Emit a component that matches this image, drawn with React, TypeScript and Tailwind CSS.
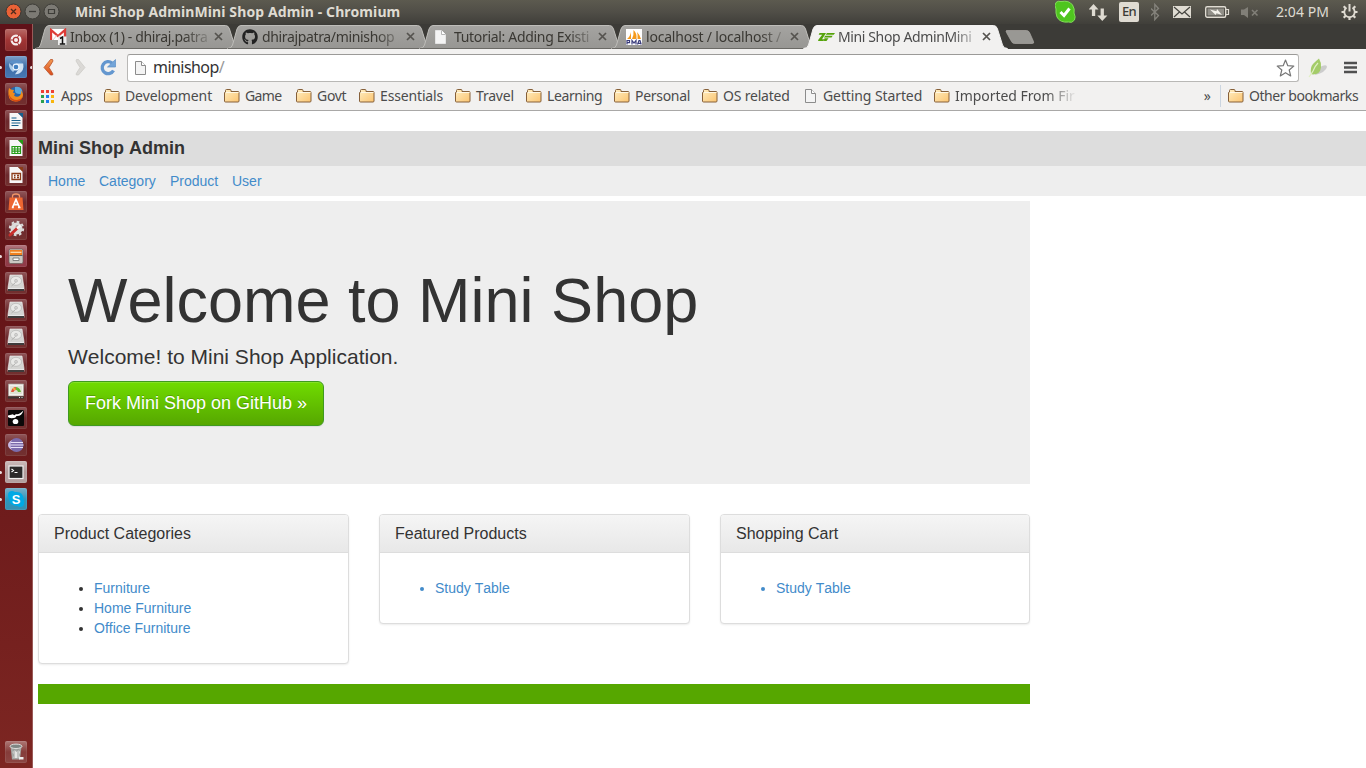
import React from "react";
import { FaGithub } from "react-icons/fa";

/* ---------- small drawings ---------- */

const Folder = () => (
  <svg width="16" height="14" viewBox="0 0 16 14" className="shrink-0">
    <defs>
      <linearGradient id="fold" x1="0" y1="0" x2="1" y2="1">
        <stop offset="0" stopColor="#ffeec2" />
        <stop offset="1" stopColor="#fbc470" />
      </linearGradient>
    </defs>
    <path d="M.5 12V3.500h1V1.500q0-1 1-1h3.500q1 0 1 1v1h7q1 0 1 1V12q0 1-1 1h-12.500q-1 0-1-1z" fill="url(#fold)" stroke="#86603a" />
    <path d="M1.500 3.500h13" stroke="#fff8e4" />
  </svg>
);

const Page = ({ dark = true }: { dark?: boolean }) => (
  <svg width="13" height="16" viewBox="0 0 13 16" className="shrink-0">
    <path d="M1.500 1.500h6l4 4v9h-10z" fill="#f4f4f4" stroke={dark ? "#8c8c8c" : "#e4e4e4"} />
    <path d="M7.500 1.500v4h4" fill="#fff" stroke={dark ? "#8c8c8c" : "#b5b5b5"} />
  </svg>
);

const Gmail = () => (
  <svg width="18" height="18" viewBox="0 0 18 18">
    <path d="M0 1h16v11H0z" fill="#fff" />
    <path d="M1 12V2l7 6 7-6v10" fill="none" stroke="#dd3b36" strokeWidth="2.300" />
    <path d="M3 12l4-5M13 12L9 7" stroke="#d8b4b0" strokeWidth=".7" />
    <path d="M8 8.500h8.500V17H8z" fill="#eee" />
    <path d="M10 10.500l2.500-1.500v7M9.800 16h5.400" fill="none" stroke="#111" strokeWidth="1.500" />
  </svg>
);

const Sails = () => (
  <svg width="16" height="16" viewBox="0 0 16 16">
    <path d="M0 0h16v16H0z" fill="#fff" />
    <path d="M1 10q3-2 4-7v7zM6 10q2-4 1.500-9Q11 4 10.500 10zM11.500 10q.5-4-.5-7 3 3 4 7z" fill="#f59a1c" />
    <path d="M1 15.500v-4h2.500v2.200H1M6 15.500v-4l2 2.500 2-2.500v4M11.500 15.500l1.500-4h1l1.200 4M12 14.300h3" fill="none" stroke="#3b3d7c" strokeWidth="1.200" />
  </svg>
);

const Zend = () => (
  <svg width="17" height="10" viewBox="0 0 17 10">
    <path d="M1.500 1H8L4 7.200h2.500L5.500 9H0l.5-1.500L4.200 2.800H.7zM9 1h8l-1.300 1.800H7.700zM7.200 3.800h7.500l-1.200 1.700H6zM6.500 6.200h4L8.500 9H6z" fill="#55a30a" />
  </svg>
);

/* ---------- top panel ---------- */

const WindowButtons = () => (
  <svg width="70" height="24" viewBox="0 0 70 24" className="shrink-0">
    <circle cx="13.500" cy="11.500" r="7.500" fill="#ea6236" stroke="#3a3632" />
    <path d="M11 9l5 5m0-5l-5 5" stroke="#4e2b1c" strokeWidth="1.300" />
    <circle cx="32.500" cy="11.500" r="7.500" fill="#7c7a74" stroke="#3e3d38" />
    <path d="M29 11.500h7" stroke="#3d3c38" strokeWidth="1.300" />
    <circle cx="51.500" cy="11.500" r="7.500" fill="#7c7a74" stroke="#3e3d38" />
    <path d="M48.500 9.500h6v4h-6z" fill="none" stroke="#3d3c38" strokeWidth="1.200" />
  </svg>
);

const Indicators = () => (
  <div className="flex h-full items-center">
    <svg width="34" height="24" viewBox="0 0 34 24">
      <path d="M1 2.500Q3 .5 6 1.600 14 0 17.500 5q2.500 4 1.500 8 2 4 .5 7-2.500 3.500-6 2Q5 23 2 17 .5 13 1 9-1 5 1 2.500z" fill="#4fc51f" stroke="#83dc5b" />
      <path d="M5.500 12l3.500 3.500 5.500-7" fill="none" stroke="#fff" strokeWidth="3" />
    </svg>
    <svg width="30" height="24" viewBox="0 0 30 24" fill="#dfdbd2">
      <path d="M4.500 4L9.500 9.500H6.200V16H2.900V9.500H-.5z" />
      <path d="M13.300 21L8.300 15.500h3.300V8.500h3.300v7h3.500z" />
    </svg>
    <div className="mr-[12px] flex h-5 w-5 items-center justify-center rounded-[2px] bg-[#dfdbd2] font-['Noto_Sans',sans-serif] text-[13px] font-medium tracking-[-0.6px] text-[#3c3b37]">En</div>
    <svg width="22" height="24" viewBox="0 0 22 24" fill="none" stroke="#85837c" strokeWidth="1.300">
      <path d="M0 8.500l7.500 7-3.700 4V4.500l3.700 4-7.500 7" />
    </svg>
    <svg width="32" height="24" viewBox="0 0 32 24">
      <path d="M0 6h18v12H0z" fill="#dfdbd2" />
      <path d="M1 7l8 7 8-7M1 17l5.500-5M17 17l-5.500-5" fill="none" stroke="#45443f" strokeWidth="1.200" />
    </svg>
    <svg width="35" height="24" viewBox="0 0 35 24">
      <rect x=".7" y="6.700" width="20" height="10.600" rx="1.500" fill="none" stroke="#dfdbd2" strokeWidth="1.400" />
      <path d="M2.500 8.500H19v7H2.500z" fill="#918f88" />
      <path d="M21 9.500h2.500v5H21" fill="none" stroke="#dfdbd2" strokeWidth="1.200" />
      <path d="M5 9.500l6.500 1.700.5-2.200 5 6-5.500-1.700-.8 1.700z" fill="#f4f2ec" />
    </svg>
    <svg width="36" height="24" viewBox="0 0 36 24">
      <path d="M1 9.500h3L8 7v11l-4-3H1z" fill="#817f78" />
      <path d="M12 10l5.500 5.500m0-5.500L12 15.500" stroke="#817f78" strokeWidth="1.600" />
    </svg>
    <span className="-mt-[2px] w-[65px] whitespace-nowrap font-['Noto_Sans',sans-serif] text-[14px] tracking-[0.05px] text-[#dfdbd2]">2:04 PM</span>
    <svg width="25" height="24" viewBox="0 0 25 24" fill="none" stroke="#dfdbd2">
      <path d="M5.500 7.800a5.200 5.200 0 1 0 6 0" strokeWidth="1.800" />
      <path d="M8.500 4v7.500" strokeWidth="2" />
      <path d="M8.500 18v2M.5 12h2.500M14 12h2.500M2.700 6.200l2 2M14.300 6.200l-2 2M2.700 17.800l2-2M14.300 17.800l-2-2" strokeWidth="2.200" />
    </svg>
  </div>
);

const TopPanel = () => (
  <header className="flex h-6 shrink-0 items-center justify-between bg-linear-to-b from-[#5c5a4f] via-[#504e47] to-[#403f3a]">
    <div className="flex items-center">
      <WindowButtons />
      <span className="-mt-[2px] ml-[5px] whitespace-nowrap font-['Noto_Sans',sans-serif] text-[14px] font-bold tracking-[0.11px] text-[#dfdbd2]">Mini Shop AdminMini Shop Admin - Chromium</span>
    </div>
    <Indicators />
  </header>
);

/* ---------- launcher ---------- */

const Disk = () => (
  <g>
    <path d="M5 3h12l2 12.500v3H3v-3z" fill="#d4d4d2" stroke="#f1efef" strokeWidth=".6" />
    <ellipse cx="11" cy="8.800" rx="5.500" ry="4.500" fill="#e9e9e7" stroke="#b5b5b3" strokeWidth=".7" />
    <circle cx="11" cy="8.800" r="1.500" fill="#d2d2d0" stroke="#aaa" strokeWidth=".5" />
    <path d="M6.500 14l4-3.500" stroke="#b0b0ae" />
    <path d="M3 17h16v2H3z" fill="#3f3b3b" />
    <path d="M3 16.500h16" stroke="#eee" strokeWidth=".8" />
  </g>
);

const Sheet = ({ color, kind }: { color: string; kind: "text" | "grid" | "slide" }) => (
  <g>
    <path d="M4.500 3H13l4.500 4.500V19h-13z" fill="#f7f7f7" />
    <path d="M13 3h5v5z" fill={color} />
    {kind === "text" && <path d="M6.500 8h5M6.500 10.500h9M6.500 13h9M6.500 15.500h7" stroke={color} strokeWidth="1.200" />}
    {kind === "grid" && <path d="M7 9.500h8.500v7H7zM7 12h8.500M7 14.200h8.500M9.800 9.500v7M12.700 9.500v7" fill="none" stroke={color} strokeWidth="1.200" />}
    {kind === "slide" && <path d="M7 9.500h8.500v6H7zM9 11.500h1.500M9 13.500h1.500M12 11.500h2M12 13.500h2" fill="none" stroke={color} strokeWidth="1.300" />}
  </g>
);

type Tile = { bg: string; art: React.ReactNode; left?: boolean; right?: boolean };

const plain = "bg-linear-to-b from-[#91575a] via-[#6d2a2e] to-[#73302f]";

const tiles: Tile[] = [
  {
    bg: "bg-linear-to-b from-[#b86b68] via-[#a13535] to-[#8d2c2d]",
    art: (
      <g>
        <circle cx="11" cy="11" r="5.500" fill="#f6eeee" />
        <circle cx="11" cy="11" r="2.600" fill="none" stroke="#a33" strokeWidth="1.200" />
        <path d="M5.500 11h3M12.300 8.600l1.600-2.700M12.300 13.400l1.600 2.700" stroke="#a33" strokeWidth="1" />
      </g>
    ),
  },
  {
    bg: "bg-linear-to-b from-[#7da1cb] via-[#3e6da6] to-[#4779b4]",
    left: true,
    right: true,
    art: (
      <g>
        <path d="M4 6.500q2-2.500 7-2.500t7 4l-7 1z" fill="#5b90c8" />
        <path d="M4 7q-.5 6 4 9l2-2-3-4z" fill="#a9cbe9" />
        <path d="M11 7.500h7.200q1.300 7-4 10-2 1-4.200.8l3.500-5z" fill="#cfe2f3" />
        <circle cx="11" cy="11" r="2.900" fill="#3f7fc0" stroke="#eef6ff" strokeWidth="1.100" />
      </g>
    ),
  },
  {
    bg: plain,
    art: (
      <g>
        <circle cx="11" cy="10.800" r="7" fill="#2766ac" />
        <path d="M10 4q5-1 7 3 1 3-2 4-5 0-5-3z" fill="#59a8dc" />
        <path d="M4 5l2 1.500 3 .5-1 2.500 2 1-1 2q3 2.500 6 0 2-2 1-5 3 3 1.500 7-2 4-7 4Q4 18 3.500 12 3 8 4 5z" fill="#f18a1c" />
        <path d="M4 11q2 6 8 6 4-.5 5.500-3-1.500 4.800-7 4.500Q4 18 4 11z" fill="#d84a12" />
      </g>
    ),
  },
  { bg: plain, art: <Sheet color="#175f8c" kind="text" /> },
  { bg: plain, art: <Sheet color="#259c16" kind="grid" /> },
  { bg: plain, art: <Sheet color="#8c3c18" kind="slide" /> },
  {
    bg: plain,
    art: (
      <g>
        <path d="M7.500 7V5q0-2 3.500-2t3.500 2v2" fill="none" stroke="#f39566" strokeWidth="1.300" />
        <path d="M4.500 6.500h13l1 12.500h-15z" fill="#ed6631" />
        <path d="M7.500 16.500L11 8.500l3.500 8M8.500 13.700h5M6.800 16.500h2M13 16.500h2.500" fill="none" stroke="#fff" strokeWidth="1.700" />
      </g>
    ),
  },
  {
    bg: plain,
    art: (
      <g>
        <circle cx="11.500" cy="10.500" r="6" fill="#dcdcda" />
        <circle cx="11.500" cy="10.500" r="6.700" fill="none" stroke="#dcdcda" strokeWidth="2" strokeDasharray="2.700 2.560" />
        <circle cx="12.500" cy="9" r="2" fill="#b9a3a3" />
        <path d="M5 17l7-6.500" stroke="#c92f2c" strokeWidth="3" strokeLinecap="round" />
        <path d="M12 10.500l3.500-3" stroke="#f7f7f7" strokeWidth="2.500" />
      </g>
    ),
  },
  {
    bg: "bg-linear-to-b from-[#b27880] via-[#963e4b] to-[#8f3a46]",
    left: true,
    art: (
      <g>
        <rect x="4" y="4" width="14" height="14.500" rx="1.500" fill="#cbc8c3" stroke="#665c58" strokeWidth=".7" />
        <path d="M5 5h12v5H5z" fill="#f07f1e" />
        <path d="M5.500 7.300h11" stroke="#ffe2b8" strokeWidth="1.200" />
        <path d="M4.500 10.500h13" stroke="#615e5b" />
        <path d="M8 13h6v2.500H8z" fill="#fff" stroke="#777" strokeWidth=".9" />
      </g>
    ),
  },
  { bg: plain, art: <Disk /> },
  { bg: plain, art: <Disk /> },
  { bg: plain, art: <Disk /> },
  { bg: plain, art: <Disk /> },
  {
    bg: plain,
    art: (
      <g>
        <path d="M3.500 4h15v12h-15z" fill="#f2f0ec" stroke="#aaa69f" strokeWidth=".7" />
        <path d="M5 6h12v8H5z" fill="#dfe2d3" />
        <path d="M6 12q1-5 5-5v3q-2 0-2.500 2z" fill="#e1543c" />
        <path d="M11 7q4 .5 5 5h-3q-.5-2-2-2z" fill="#67b535" />
        <path d="M8 8.500l2.500 1" stroke="#f3be42" strokeWidth="1.500" />
        <path d="M3 16.500h16v2H3z" fill="#3b3533" />
        <path d="M14 17.500h1M16.500 17.500h1" stroke="#ddd" />
      </g>
    ),
  },
  {
    bg: plain,
    art: (
      <g>
        <rect x="3" y="3" width="16" height="16" rx="1" fill="#0b0909" />
        <path d="M3 8.500l5-1.300q1.500 2 3-.2 3 1 7.500-3.500-2 6-7 5.500-1 2.500-3 2Q4 11.500 3 10z" fill="#fff" />
        <ellipse cx="10.500" cy="14.500" rx="2.800" ry="2.600" fill="#fff" />
      </g>
    ),
  },
  {
    bg: plain,
    art: (
      <g>
        <circle cx="11.500" cy="11" r="7" fill="#7c6cac" />
        <path d="M5 8.500h13M4.500 11h14M5 13.500h13" stroke="#e9e2f7" strokeWidth="1.100" />
        <path d="M7 6q-3 5 0 10-4-2-4-5t4-5z" fill="#c7b8e2" />
      </g>
    ),
  },
  {
    bg: "bg-linear-to-b from-[#cdbcbb] via-[#b19b9b] to-[#b5a1a1]",
    left: true,
    art: (
      <g>
        <rect x="4" y="5" width="14" height="12.500" fill="#2c2929" stroke="#f1efee" strokeWidth="1.200" />
        <path d="M6.500 8l2 1.500-2 1.500M9.500 11.500h3" fill="none" stroke="#fff" strokeWidth="1.100" />
      </g>
    ),
  },
  {
    bg: "bg-linear-to-b from-[#76afc8] via-[#2c98be] to-[#368fb0]",
    left: true,
    art: (
      <g>
        <path d="M4 4q3-2 6 0 8-1 8.500 7 2 5-1 7.500-3 1-5-.5-8 0-8.500-7Q2 7 4 4z" fill="#00a9e5" />
        <text x="11.200" y="15.800" textAnchor="middle" fontSize="13" fontWeight="700" fill="#fff" fontFamily="Liberation Sans, sans-serif">S</text>
      </g>
    ),
  },
];

const LauncherTile = ({ bg, art, left, right }: Tile) => (
  <div className="relative flex justify-center">
    {left && <span className="absolute left-0 top-[10px] h-[3px] w-[2px] rounded-r bg-[#e9dede]" />}
    {right && <span className="absolute right-0 top-[10px] h-[3px] w-[2px] rounded-l bg-[#e9dede]" />}
    <div className={"h-[22px] w-[22px] rounded-[2px] shadow-[inset_0_0_0_1px_rgba(255,255,255,0.08)] " + bg}>
      <svg width="22" height="22" viewBox="0 0 22 22">{art}</svg>
    </div>
  </div>
);

const Launcher = () => (
  <aside className="flex w-[33px] shrink-0 flex-col gap-[5px] border-r border-[#9a5a58] bg-linear-to-b from-[#5f1118] via-[#681719] to-[#7d2622] py-[5px]">
    {tiles.map((t, i) => (
      <LauncherTile key={i} {...t} />
    ))}
    <div className="mt-auto">
      <LauncherTile
        bg="bg-linear-to-b from-[#ae7976] via-[#853c3a] to-[#8c4643]"
        art={
          <g>
            <path d="M5.500 5h11l-1.500 13.500H7z" fill="#a5a7a4" />
            <path d="M7.500 11l2-2 2 2 2-2 1.500 2-1 3 1 3h-7l1-3z" fill="#e4e4e2" />
            <path d="M9 8v9M13 8v9" stroke="#8e908d" strokeWidth=".8" />
            <ellipse cx="11" cy="5.300" rx="6" ry="2.200" fill="#7f8784" stroke="#dededc" />
            <path d="M14 16h4.500v2.500H14z" fill="#eee" />
          </g>
        }
      />
    </div>
  </aside>
);

/* ---------- browser ---------- */

type Tab = { label: string; icon: React.ReactNode; tracking: string; active?: boolean };

const tabs: Tab[] = [
  { label: "Inbox (1) - dhiraj.patra", icon: <Gmail />, tracking: "tracking-[-0.35px]" },
  { label: "dhirajpatra/minishop", icon: <FaGithub size={16} color="#222" />, tracking: "tracking-[-0.35px]" },
  { label: "Tutorial: Adding Existi", icon: <Page dark={false} />, tracking: "tracking-[-0.32px]" },
  { label: "localhost / localhost /", icon: <Sails />, tracking: "tracking-[-0.2px]" },
  { label: "Mini Shop AdminMini", icon: <Zend />, tracking: "tracking-[-0.38px]", active: true },
];

const TabItem = ({ label, icon, tracking, active }: Tab) => (
  <div className="relative h-[25px] w-[192px] shrink-0">
    <svg width="208" height="25" viewBox="0 0 208 25" className="absolute left-0 top-0">
      <defs>
        <linearGradient id="idle" x1="0" y1="0" x2="0" y2="1">
          <stop offset="0" stopColor="#a5a4a1" />
          <stop offset="1" stopColor="#979693" />
        </linearGradient>
      </defs>
      <path
        d="M1.500 24.500q4 0 5-3.500l4.500-16q1.300-3.500 4-3.500h176.500q3 0 4 3.500l5 16q1.300 3.500 5 3.500z"
        fill={active ? "#f2f1f0" : "url(#idle)"}
        stroke={active ? "#f2f1f0" : "#bebdb9"}
        strokeWidth="1"
      />
      {!active && <path d="M2 24.500h204" stroke="#6b6a66" />}
    </svg>
    <div className="relative flex h-full items-center pl-4">
      <span className="flex w-5 shrink-0 items-center">{icon}</span>
      <span
        className={
          "w-[140px] whitespace-nowrap font-['Noto_Sans',sans-serif] text-[14px] leading-[22px] [mask-image:linear-gradient(to_right,black_114px,transparent_145px)] " +
          tracking +
          (active ? " text-[#4c4c4c]" : " text-[#3a3833]")
        }
      >
        {label}
      </span>
      <svg width="9" height="9" viewBox="0 0 9 9" className="ml-[4px] shrink-0">
        <path d="M1 1l7 7m0-7L1 8" stroke="#55534f" strokeWidth="1.700" />
      </svg>
    </div>
  </div>
);

const TabStrip = () => (
  <div className="flex h-[25px] shrink-0 bg-[#3c3b37] pl-px">
    {tabs.map((t) => (
      <TabItem key={t.label} {...t} />
    ))}
    <svg width="50" height="25" viewBox="0 0 50 25" className="shrink-0">
      <path d="M12.500 6.500h20q2 0 3 2l4 9q.7 2-1 2h-18q-2 0-3-2l-5-9q-1-2 0-2z" fill="#999894" stroke="#aaa8a4" strokeWidth=".7" />
    </svg>
  </div>
);

const Toolbar = () => (
  <div className="flex h-[33px] shrink-0 items-end">
    <svg width="94" height="33" viewBox="0 0 94 33" className="shrink-0">
      <defs>
        <linearGradient id="back" x1="0" y1="0" x2="0" y2="1">
          <stop offset="0" stopColor="#f39a52" />
          <stop offset="1" stopColor="#d94b1c" />
        </linearGradient>
      </defs>
      <path d="M17.500 10.500h2l.5 1.500-4 6.500 4 6.500-.5 1h-2l-6.500-7.500z" fill="url(#back)" stroke="#b9532a" strokeWidth=".8" />
      <path d="M45.500 10.500h-2L43 12l4 6.500-4 6.500.5 1h2l6.500-7.500z" fill="#dbd9d6" stroke="#cac8c4" strokeWidth=".7" />
      <path d="M80.500 21.500a6 6 0 1 1-1.500-7.500" fill="none" stroke="#6497cf" strokeWidth="3.300" />
      <path d="M82.500 10.500V18h-8z" fill="#73a5d9" stroke="#5d8fc6" strokeWidth=".7" />
    </svg>
    <div className="flex h-[28px] w-[1172px] shrink-0 items-center rounded-[3px] border border-[#b9b8b6] border-t-[#9b9a98] bg-white pl-[6px] pr-[3px]">
      <Page />
      <span className="-mt-[2px] ml-[6px] font-['Noto_Sans',sans-serif] text-[16px] tracking-[-0.55px] text-[#333]">
        minishop<span className="text-[#999]">/</span>
      </span>
      <svg width="20" height="20" viewBox="0 0 20 20" className="ml-auto">
        <path d="M10.500 2l2.300 5.700 6 .4-4.600 3.900 1.500 5.900-5.200-3.200-5.200 3.200L6.800 12 2.200 8.100l6-.4z" fill="#fff" stroke="#777" strokeWidth="1.200" strokeLinejoin="round" />
      </svg>
    </div>
    <svg width="67" height="33" viewBox="0 0 67 33" className="shrink-0">
      <path d="M16 26q3-7 7-9 5-2 5 1-1 5-12 8z" fill="#ccc" />
      <path d="M12 25q-1-7 2-10 4-4 6-5.500 2.500 4 2 9-1 7-8 7z" fill="#a4cc68" />
      <path d="M10 28q3-4 4-6 2-5 5-8" fill="none" stroke="#e0efc4" strokeWidth="1.200" />
      <path d="M45 14h13M45 18.500h13M45 23h13" stroke="#505050" strokeWidth="2.500" />
    </svg>
  </div>
);

type Mark = { label: string; w: string; tracking: string; page?: boolean };

const marks: Mark[] = [
  { label: "Development", w: "w-[120px]", tracking: "tracking-[-0.1px]" },
  { label: "Game", w: "w-[72px]", tracking: "tracking-[-0.6px]" },
  { label: "Govt", w: "w-[63px]", tracking: "tracking-[-0.3px]" },
  { label: "Essentials", w: "w-[96px]", tracking: "tracking-[-0.15px]" },
  { label: "Travel", w: "w-[71px]", tracking: "tracking-[-0.2px]" },
  { label: "Learning", w: "w-[88px]", tracking: "tracking-[-0.4px]" },
  { label: "Personal", w: "w-[88px]", tracking: "tracking-[-0.3px]" },
  { label: "OS related", w: "w-[102px]", tracking: "tracking-[-0.2px]" },
  { label: "Getting Started", w: "w-[130px]", tracking: "tracking-[-0.1px]", page: true },
];

const BookmarkBar = () => (
  <div className="flex h-[29px] shrink-0 items-center whitespace-nowrap border-b border-[#a9a8a7] pl-2 font-['Noto_Sans',sans-serif] text-[14px] text-[#4c4c4c]">
    <div className="flex w-[63px] shrink-0 items-center">
      <svg width="13" height="13" viewBox="0 0 13 13" className="mr-[7px]">
        <path d="M0 0h3v3H0zM5 0h3v3H5zM10 0h3v3h-3z" fill="#ee4035" />
        <path d="M0 5h3v3H0zM0 10h3v3H0z" fill="#2ba04e" />
        <path d="M5 5h3v3H5z" fill="#1d7df0" />
        <path d="M5 10h3v3H5z" fill="#1d7df0" />
        <path d="M10 5h3v3h-3zM10 10h3v3h-3z" fill="#f8b50c" />
      </svg>
      <span className="-mt-[2px] tracking-[-0.4px]">Apps</span>
    </div>
    {marks.map((m) => (
      <div key={m.label} className={"flex shrink-0 items-center " + m.w}>
        <span className={m.page ? "flex w-[19px]" : "flex w-[21px]"}>{m.page ? <Page /> : <Folder />}</span>
        <span className={"-mt-[2px] " + m.tracking}>{m.label}</span>
      </div>
    ))}
    <div className="flex w-[141px] shrink-0 items-center [mask-image:linear-gradient(to_right,black_112px,transparent_143px)]">
      <span className="flex w-[21px] shrink-0"><Folder /></span>
      <span className="-mt-[2px] tracking-[-0.05px]">Imported From Fire</span>
    </div>
    <span className="-mt-[2px] ml-auto mr-[9px]">»</span>
    <div className="flex h-[22px] w-[146px] items-center border-l border-[#cbd5e0] pl-[7px]">
      <span className="flex w-[21px] shrink-0"><Folder /></span>
      <span className="-mt-[2px] tracking-[-0.45px]">Other bookmarks</span>
    </div>
  </div>
);

/* ---------- web page ---------- */

const Panel = ({ title, items, marker }: { title: string; items: string[]; marker: string }) => (
  <section className="rounded-[4px] border border-[#ddd] bg-white shadow-[0_1px_2px_rgba(0,0,0,0.075)]">
    <h3 className="rounded-t-[3px] border-b border-[#ddd] bg-linear-to-b from-[#f5f5f5] to-[#e8e8e8] px-[15px] py-[10px] text-[16px] leading-[17px]">{title}</h3>
    <ul className={"list-disc px-[15px] py-[25px] pl-[55px] leading-5 " + marker}>
      {items.map((i) => (
        <li key={i}>
          <a className="text-[#428bca]">{i}</a>
        </li>
      ))}
    </ul>
  </section>
);

const Shop = () => (
  <main className="flex-1 overflow-hidden bg-white pt-5 font-['Liberation_Sans',Arial,sans-serif] text-[14px] text-[#333] [font-kerning:none]">
    <h2 className="flex h-[35px] items-center bg-[#ddd] pl-[5px] text-[18px] font-bold">Mini Shop Admin</h2>
    <nav className="mb-[5px] flex h-[30px] items-center bg-[#eee] pl-[15px] text-[#428bca]">
      <a className="w-[51px]">Home</a>
      <a className="w-[71px]">Category</a>
      <a className="w-[62px]">Product</a>
      <a>User</a>
    </nav>
    <div className="ml-[5px] w-[992px]">
      <div className="h-[283px] bg-[#eee] px-[30px] pt-[68px]">
        <h1 className="text-[63px] leading-none">Welcome to Mini Shop</h1>
        <p className="mt-[10px] text-[21px] leading-[30px]">Welcome! to Mini Shop Application.</p>
        <a className="mt-[9px] flex h-[45px] w-[256px] items-center justify-center rounded-[6px] border border-[#3f9a1f] bg-linear-to-b from-[#70dc00] to-[#56a700] text-[18px] text-white shadow-[inset_0_1px_0_rgba(255,255,255,0.15),0_1px_1px_rgba(0,0,0,0.075)] [text-shadow:0_-1px_0_rgba(0,0,0,0.2)]">
          Fork Mini Shop on GitHub »
        </a>
      </div>
      <div className="mt-[30px] grid grid-cols-[311px_311px_310px] items-start gap-[30px]">
        <Panel title="Product Categories" items={["Furniture", "Home Furniture", "Office Furniture"]} marker="marker:text-[#333]" />
        <Panel title="Featured Products" items={["Study Table"]} marker="marker:text-[#428bca]" />
        <Panel title="Shopping Cart" items={["Study Table"]} marker="marker:text-[#428bca]" />
      </div>
      <div className="mt-5 h-5 bg-[#56a700]" />
    </div>
  </main>
);

export default function App() {
  return (
    <div className="flex h-[768px] w-[1366px] flex-col overflow-hidden">
      <TopPanel />
      <div className="flex min-h-0 flex-1">
        <Launcher />
        <div className="flex min-w-0 flex-1 flex-col bg-[#f2f1f0]">
          <TabStrip />
          <Toolbar />
          <BookmarkBar />
          <Shop />
        </div>
      </div>
    </div>
  );
}
